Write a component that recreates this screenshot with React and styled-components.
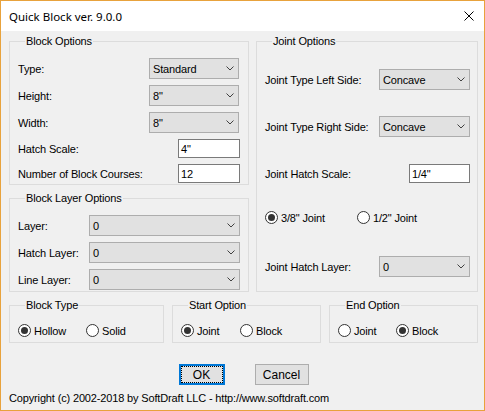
import styled, { createGlobalStyle } from 'styled-components'

const GlobalStyle = createGlobalStyle`
  html, body { margin: 0; padding: 0; background: #fff; }
`

const Window = styled.div`
  width: 485px;
  height: 411px;
  box-sizing: border-box;
  border: 1px solid #e8a23c;
  background: #f0f0f0;
  display: flex;
  flex-direction: column;
  font-family: "Liberation Sans", Arial, sans-serif;
  font-size: 11px;
  letter-spacing: -0.15px;
  color: #000;
`

const TitleBar = styled.div`
  height: 30px;
  flex: none;
  background: #fff;
  display: flex;
  align-items: center;
  justify-content: space-between;
  padding: 0 10px 0 8px;
`

const Title = styled.div`
  font-family: "Noto Sans", "Open Sans", sans-serif;
  font-size: 11.5px;
  letter-spacing: 0;
`

const Body = styled.div`
  flex: 1;
  padding: 4px 6px 0 8px;
  display: flex;
  flex-direction: column;
`

const TopArea = styled.div`
  display: flex;
  gap: 7px;
`

const Column = styled.div`
  width: ${p => p.$w}px;
  display: flex;
  flex-direction: column;
  gap: 7px;
`

const Group = styled.fieldset`
  margin: 0;
  min-width: 0;
  box-sizing: border-box;
  width: ${p => (p.$w ? `${p.$w}px` : 'auto')};
  flex: ${p => (p.$grow ? 1 : 'none')};
  border: 1px solid #dcdcdc;
  padding: ${p => p.$pad || '10px 8px 1px 8px'};
  display: flex;
  flex-direction: column;
  gap: ${p => p.$gap || 0}px;
`

const Legend = styled.legend`
  margin-left: 7px;
  padding: 0 1px;
  line-height: 13px;
`

const Row = styled.div`
  height: ${p => p.$h || 21}px;
  margin-top: ${p => p.$mt || 0}px;
  display: flex;
  align-items: center;
  justify-content: space-between;
`

const Combo = styled.div`
  width: ${p => p.$w}px;
  height: 21px;
  margin-right: ${p => p.$mr || 0}px;
  box-sizing: border-box;
  background: #e1e1e1;
  border: 1px solid #adadad;
  display: flex;
  align-items: center;
  justify-content: space-between;
  padding: 0 4px 0 3px;
`

const TextBox = styled.div`
  width: ${p => p.$w}px;
  height: 19px;
  box-sizing: border-box;
  background: #fff;
  border: 1px solid #7a7a7a;
  display: flex;
  align-items: center;
  padding-left: 2px;
`

const RadioRow = styled.div`
  display: flex;
  height: 13px;
  margin-top: ${p => p.$mt || 0}px;
  align-items: center;
`

const RadioItem = styled.label`
  width: ${p => p.$w}px;
  display: flex;
  align-items: center;
  gap: 3px;
`

const RadioCircle = styled.span`
  width: 13px;
  height: 13px;
  flex: none;
  box-sizing: border-box;
  border-radius: 50%;
  border: 1px solid #333;
  background: #fff;
  display: flex;
  align-items: center;
  justify-content: center;
  &::after {
    content: "";
    width: 7px;
    height: 7px;
    border-radius: 50%;
    background: ${p => (p.$on ? '#333' : 'transparent')};
  }
`

const BottomGroups = styled.div`
  display: flex;
  gap: 8px;
  margin-top: 7px;
`

const Buttons = styled.div`
  display: flex;
  justify-content: center;
  gap: 30px;
  margin-top: 21px;
`

const Button = styled.div`
  width: ${p => p.$w}px;
  height: 21px;
  box-sizing: border-box;
  background: #e1e1e1;
  border: ${p => (p.$focus ? '2px solid #0078d7' : '1px solid #adadad')};
  outline: ${p => (p.$focus ? '1px dotted #000' : 'none')};
  outline-offset: -3px;
  display: flex;
  align-items: center;
  justify-content: center;
  font-size: 12px;
  letter-spacing: 0;
`

const Copyright = styled.div`
  margin-top: 7px;
  line-height: 13px;
`

const Chevron = () => (
  <svg width="8" height="5" viewBox="0 0 8 5">
    <polyline points="0.5,0.5 4,4 7.5,0.5" fill="none" stroke="#404040" strokeWidth="1" />
  </svg>
)

const CloseIcon = () => (
  <svg width="10" height="10" viewBox="0 0 10 10">
    <path d="M0.5 0.5 L9.5 9.5 M9.5 0.5 L0.5 9.5" stroke="#000" strokeWidth="1" />
  </svg>
)

const Select = ({ w, value, mr }) => (
  <Combo $w={w} $mr={mr}>
    <span>{value}</span>
    <Chevron />
  </Combo>
)

const Radio = ({ w, on, children }) => (
  <RadioItem $w={w}>
    <RadioCircle $on={on} />
    {children}
  </RadioItem>
)

export default function App() {
  return (
    <>
      <GlobalStyle />
      <Window>
        <TitleBar>
          <Title>Quick Block ver. 9.0.0</Title>
          <CloseIcon />
        </TitleBar>
        <Body>
          <TopArea>
            <Column $w={240}>
              <Group $gap={6}>
                <Legend>Block Options</Legend>
                <Row><span>Type:</span><Select w={90} mr={1} value="Standard" /></Row>
                <Row><span>Height:</span><Select w={90} mr={1} value={'8"'} /></Row>
                <Row><span>Width:</span><Select w={90} mr={1} value={'8"'} /></Row>
                <Row $h={19}><span>Hatch Scale:</span><TextBox $w={62}>4"</TextBox></Row>
                <Row $h={19}><span>Number of Block Courses:</span><TextBox $w={62}>12</TextBox></Row>
              </Group>
              <Group $gap={6} $grow>
                <Legend>Block Layer Options</Legend>
                <Row><span>Layer:</span><Select w={151} value="0" /></Row>
                <Row><span>Hatch Layer:</span><Select w={151} value="0" /></Row>
                <Row><span>Line Layer:</span><Select w={151} value="0" /></Row>
              </Group>
            </Column>
            <Group $w={222} $pad="21px 7px 14px 8px">
              <Legend>Joint Options</Legend>
              <Row><span>Joint Type Left Side:</span><Select w={91} value="Concave" /></Row>
              <Row $mt={26}><span>Joint Type Right Side:</span><Select w={91} value="Concave" /></Row>
              <Row $h={19} $mt={27}><span>Joint Hatch Scale:</span><TextBox $w={61}>1/4"</TextBox></Row>
              <RadioRow $mt={28}>
                <Radio w={92} on>3/8" Joint</Radio>
                <Radio w={80}>1/2" Joint</Radio>
              </RadioRow>
              <Row $mt={32}><span>Joint Hatch Layer:</span><Select w={91} value="0" /></Row>
            </Group>
          </TopArea>
          <BottomGroups>
            <Group $w={155} $pad="12px 8px 5px 8px">
              <Legend>Block Type</Legend>
              <RadioRow>
                <Radio w={68} on>Hollow</Radio>
                <Radio w={60}>Solid</Radio>
              </RadioRow>
            </Group>
            <Group $w={149} $pad="12px 8px 5px 8px">
              <Legend>Start Option</Legend>
              <RadioRow>
                <Radio w={59} on>Joint</Radio>
                <Radio w={60}>Block</Radio>
              </RadioRow>
            </Group>
            <Group $w={149} $pad="12px 8px 5px 8px">
              <Legend>End Option</Legend>
              <RadioRow>
                <Radio w={58}>Joint</Radio>
                <Radio w={60} on>Block</Radio>
              </RadioRow>
            </Group>
          </BottomGroups>
          <Buttons>
            <Button $w={46} $focus>OK</Button>
            <Button $w={54}>Cancel</Button>
          </Buttons>
          <Copyright>Copyright (c) 2002-2018 by SoftDraft LLC - http://www.softdraft.com</Copyright>
        </Body>
      </Window>
    </>
  )
}
